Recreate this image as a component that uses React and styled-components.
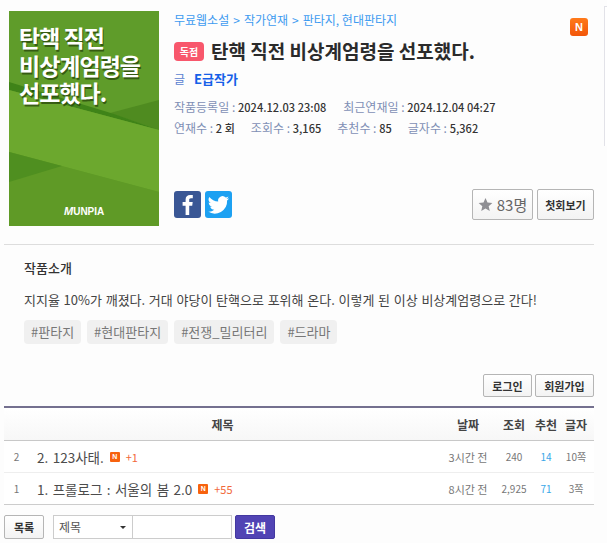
import styled, { createGlobalStyle } from "styled-components";

const GlobalStyle = createGlobalStyle`
  html, body {
    margin: 0;
    padding: 0;
    background: #fdfdfd;
    overflow: hidden;
  }
  body {
    font-family: "Noto Sans CJK KR", "Liberation Sans", sans-serif;
    color: #333;
  }
  * { box-sizing: border-box; }
`;

const Page = styled.div`
  width: 607px;
  height: 543px;
  position: relative;
  padding: 11px 13px 0 4px;
  display: flex;
  flex-direction: column;
`;

const ScrollEdge = styled.div`
  position: absolute;
  top: 6px;
  right: 0;
  width: 3px;
  height: 140px;
  border-left: 1px solid #e2e2e8;
  border-top: 1px solid #e2e2e8;
  background: #fff;
`;

const Head = styled.div`
  display: flex;
  height: 234px;
  padding-left: 5px;
  gap: 15px;
  border-bottom: 1px solid #ddd;
`;

const Cover = styled.div`
  position: relative;
  width: 150px;
  height: 215px;
  flex: none;
  background: #5f9c2a;
  overflow: hidden;
`;

const CoverArt = styled.svg`
  position: absolute;
  inset: 0;
`;

const CoverTitle = styled.div`
  position: absolute;
  left: 10px;
  top: 13px;
  font-size: 23px;
  line-height: 27.5px;
  font-weight: 700;
  letter-spacing: -1px;
  color: #fff;
  text-shadow: 1px 2px 0 rgba(40, 70, 10, 0.75);
  white-space: nowrap;
`;

const CoverLogo = styled.div`
  position: absolute;
  left: 55px;
  bottom: 9px;
  font-family: "Liberation Sans", sans-serif;
  font-size: 10px;
  font-weight: 700;
  color: #fff;
`;

const LogoInitial = styled.i`
  font-size: 11px;
`;

const Info = styled.div`
  position: relative;
  flex: 1;
  display: flex;
  flex-direction: column;
`;

const Crumbs = styled.div`
  font-size: 12px;
  line-height: 18px;
  color: #3d9bf0;
  display: flex;
  gap: 4px;
`;

const NBadge = styled.div`
  position: absolute;
  top: 7px;
  right: 6px;
  width: 18px;
  height: 18px;
  border-radius: 3px;
  background: linear-gradient(#ff7a1a, #f2560a);
  color: #fff;
  font-family: "Liberation Sans", sans-serif;
  font-size: 11px;
  font-weight: 700;
  text-align: center;
  line-height: 18px;
`;

const TitleRow = styled.div`
  display: flex;
  align-items: center;
  gap: 7px;
  margin-top: 9px;
`;

const Exclusive = styled.span`
  width: 30px;
  height: 19px;
  border-radius: 4px;
  background: #f8576c;
  color: #fff;
  font-size: 10px;
  font-weight: 700;
  line-height: 19px;
  text-align: center;
`;

const Title = styled.h1`
  margin: 0;
  font-size: 19px;
  line-height: 26px;
  font-weight: 700;
  color: #2b2b2b;
  white-space: nowrap;
`;

const AuthorRow = styled.div`
  display: flex;
  align-items: center;
  gap: 9px;
  margin-top: 6px;
  font-size: 12px;
  line-height: 18px;
  color: #5a7fd0;
`;

const AuthorName = styled.span`
  color: #1560e8;
  font-size: 13px;
  font-weight: 700;
`;

const MetaRow = styled.div`
  display: flex;
  gap: ${(p) => p.$gap}px;
  margin-top: ${(p) => p.$top}px;
  font-size: 12px;
  line-height: 16px;
  color: #7f8fb5;
  white-space: nowrap;
`;

const MetaValue = styled.b`
  color: #333;
  font-size: 11px;
  font-weight: 500;
  letter-spacing: 0.05px;
`;

const ActionRow = styled.div`
  margin-top: auto;
  margin-bottom: 24px;
  display: flex;
  align-items: center;
  gap: 4px;
`;

const Social = styled.svg`
  display: block;
  width: 27px;
  height: 27px;
`;

const Spacer = styled.div`
  flex: 1;
`;

const OutlineButton = styled.button`
  width: ${(p) => p.$w}px;
  height: ${(p) => p.$h || 23}px;
  padding: 0;
  border: 1px solid #b5b5b5;
  border-radius: 2px;
  background: linear-gradient(#fff, #f3f3f3);
  font-family: inherit;
  font-size: 11px;
  font-weight: 700;
  color: #333;
  display: inline-flex;
  align-items: center;
  justify-content: center;
  gap: 4px;
`;

const LikeCount = styled.span`
  font-size: 15px;
  font-weight: 400;
  color: #666;
`;

const Intro = styled.section`
  padding: 14px 0 0 20px;
`;

const IntroTitle = styled.h2`
  margin: 0;
  font-size: 13px;
  line-height: 18px;
  font-weight: 500;
  color: #333;
`;

const IntroText = styled.p`
  margin: 14px 0 0;
  font-size: 13px;
  line-height: 18px;
  word-spacing: 0.8px;
  color: #444;
  white-space: nowrap;
`;

const Tags = styled.div`
  display: flex;
  gap: 6px;
  margin-top: 11px;
`;

const Tag = styled.span`
  height: 24px;
  padding: 0 7px;
  border-radius: 4px;
  background: #f0f0f0;
  font-size: 13px;
  line-height: 24px;
  color: #777;
`;

const AuthBar = styled.div`
  display: flex;
  justify-content: flex-end;
  gap: 3px;
  margin-top: 30px;
`;

const Table = styled.div`
  margin-top: 9px;
  border-top: 2px solid #74708f;
  border-bottom: 1px solid #ccc;
  background: #fff;
`;

const Row = styled.div`
  display: grid;
  grid-template-columns: 25px 1fr 52px 40px 24px 36px;
  align-items: center;
  height: ${(p) => (p.$head ? 33 : p.$last ? 31 : 32)}px;
  border-bottom: ${(p) => (p.$last ? "none" : p.$head ? "1px solid #c8c8c8" : "1px solid #eee")};
  background: ${(p) => (p.$head ? "linear-gradient(#fff, #f7f7f7)" : "#fff")};
`;

const HeadCell = styled.div`
  text-align: center;
  font-size: 12px;
  font-weight: 700;
  color: #444;
  white-space: nowrap;
`;

const SubjectHead = styled(HeadCell)`
  padding-right: 26px;
`;

const Cell = styled.div`
  text-align: center;
  font-size: ${(p) => p.$size || 10}px;
  color: ${(p) => p.$color || "#777"};
  white-space: nowrap;
`;

const Subject = styled.div`
  display: flex;
  align-items: center;
  gap: 6px;
  padding-left: 8px;
  font-size: 13.5px;
  word-spacing: 1.4px;
  color: #4c4c4c;
`;

const NewMark = styled.span`
  width: 10px;
  height: 10px;
  border-radius: 1px;
  background: #f7620e;
  color: #fff;
  font-family: "Liberation Sans", sans-serif;
  font-size: 7px;
  font-weight: 700;
  line-height: 10px;
  text-align: center;
`;

const Plus = styled.span`
  font-size: 11px;
  color: #f2683a;
`;

const Footer = styled.div`
  display: flex;
  align-items: center;
  margin-top: 10px;
`;

const SearchForm = styled.div`
  display: flex;
  margin-left: 9px;
`;

const SelectBox = styled.div`
  width: 80px;
  height: 24px;
  border: 1px solid #ccc;
  background: #fff;
  padding-left: 5px;
  font-size: 12px;
  line-height: 22px;
  color: #555;
  position: relative;
`;

const Caret = styled.span`
  position: absolute;
  right: 6px;
  top: 10px;
  border-left: 3px solid transparent;
  border-right: 3px solid transparent;
  border-top: 3px solid #333;
`;

const SearchInput = styled.input`
  width: 99px;
  height: 24px;
  border: 1px solid #ccc;
  border-left: none;
  background: #fff;
`;

const SearchButton = styled.button`
  width: 40px;
  height: 24px;
  margin-left: 3px;
  border: 1px solid #4338a0;
  border-radius: 2px;
  background: #5144b4;
  color: #fff;
  font-family: inherit;
  font-size: 12px;
  font-weight: 700;
  padding: 0;
`;

const rows = [
  { no: 2, title: "2. 123사태.", plus: "+1", date: "3시간 전", views: "240", rec: "14", size: "10쪽" },
  { no: 1, title: "1. 프롤로그 : 서울의 봄 2.0", plus: "+55", date: "8시간 전", views: "2,925", rec: "71", size: "3쪽" },
];

export default function App() {
  return (
    <>
      <GlobalStyle />
      <Page>
        <ScrollEdge />
        <Head>
          <Cover>
            <CoverArt width="150" height="215" viewBox="0 0 150 215">
              <polygon points="101,102 150,89 150,119" fill="#4f8b20" />
              <polygon points="0,71 105,103 150,119 0,79" fill="#3f8318" />
              <polygon points="0,79 150,119 150,181 0,141" fill="#6ca82e" />
              <polygon points="0,141 150,181 150,215 0,215" fill="#5f9a26" />
              <polygon points="0,141 53,155 0,171" fill="#4f8f20" />
            </CoverArt>
            <CoverTitle>
              탄핵 직전
              <br />
              비상계엄령을
              <br />
              선포했다.
            </CoverTitle>
            <CoverLogo><LogoInitial>M</LogoInitial>UNPIA</CoverLogo>
          </Cover>
          <Info>
            <Crumbs>
              <span>무료웹소설</span>
              <span>&gt;</span>
              <span>작가연재</span>
              <span>&gt;</span>
              <span>판타지, 현대판타지</span>
            </Crumbs>
            <NBadge>N</NBadge>
            <TitleRow>
              <Exclusive>독점</Exclusive>
              <Title>탄핵 직전 비상계엄령을 선포했다.</Title>
            </TitleRow>
            <AuthorRow>
              <span>글</span>
              <AuthorName>E급작가</AuthorName>
            </AuthorRow>
            <MetaRow $gap={17} $top={11}>
              <span>작품등록일 : <MetaValue>2024.12.03 23:08</MetaValue></span>
              <span>최근연재일 : <MetaValue>2024.12.04 04:27</MetaValue></span>
            </MetaRow>
            <MetaRow $gap={16} $top={5}>
              <span>연재수 : <MetaValue>2 회</MetaValue></span>
              <span>조회수 : <MetaValue>3,165</MetaValue></span>
              <span>추천수 : <MetaValue>85</MetaValue></span>
              <span>글자수 : <MetaValue>5,362</MetaValue></span>
            </MetaRow>
            <ActionRow>
              <Social viewBox="0 0 27 27">
                <rect width="27" height="27" rx="3" fill="#3a5795" />
                <path d="M15.200 24v-9.300h3l.5-3.600h-3.500V9c0-1 .3-1.700 1.800-1.700h1.800V4.100c-.4 0-1.400-.1-2.700-.1-2.700 0-4.500 1.600-4.500 4.600v2.500H8.600v3.600h3V24z" fill="#fff" />
              </Social>
              <Social viewBox="0 0 27 27">
                <rect width="27" height="27" rx="3" fill="#1da1f2" />
                <path d="M24 7.200c-.8.400-1.600.6-2.500.7.900-.5 1.600-1.400 1.900-2.400-.8.500-1.800.9-2.700 1.100a4.400 4.400 0 0 0-7.500 4C9.700 10.400 6.500 8.600 4.300 6a4.400 4.400 0 0 0 1.400 5.900c-.7 0-1.400-.2-2-.5 0 2.100 1.500 3.900 3.500 4.300-.6.200-1.300.2-2 .1.600 1.800 2.200 3 4.100 3A8.800 8.800 0 0 1 3 20.600a12.400 12.400 0 0 0 19.100-11c.8-.7 1.500-1.500 1.900-2.400z" fill="#fff" />
              </Social>
              <Spacer />
              <OutlineButton $w={61} $h={31}>
                <svg width="15" height="15" viewBox="0 0 24 24">
                  <path d="M12 1.500l3.200 7.200 7.800.8-5.900 5.200 1.700 7.700-6.800-4-6.800 4 1.700-7.700L1 9.500l7.800-.8z" fill="#8f8f94" />
                </svg>
                <LikeCount>83명</LikeCount>
              </OutlineButton>
              <OutlineButton $w={57} $h={31}>첫회보기</OutlineButton>
            </ActionRow>
          </Info>
        </Head>
        <Intro>
          <IntroTitle>작품소개</IntroTitle>
          <IntroText>지지율 10%가 깨졌다. 거대 야당이 탄핵으로 포위해 온다. 이렇게 된 이상 비상계엄령으로 간다!</IntroText>
          <Tags>
            <Tag>#판타지</Tag>
            <Tag>#현대판타지</Tag>
            <Tag>#전쟁_밀리터리</Tag>
            <Tag>#드라마</Tag>
          </Tags>
        </Intro>
        <AuthBar>
          <OutlineButton $w={49}>로그인</OutlineButton>
          <OutlineButton $w={59}>회원가입</OutlineButton>
        </AuthBar>
        <Table>
          <Row $head>
            <span />
            <SubjectHead>제목</SubjectHead>
            <HeadCell>날짜</HeadCell>
            <HeadCell>조회</HeadCell>
            <HeadCell>추천</HeadCell>
            <HeadCell>글자</HeadCell>
          </Row>
          {rows.map((r, i) => (
            <Row key={r.no} $last={i === rows.length - 1}>
              <Cell>{r.no}</Cell>
              <Subject>
                <span>{r.title}</span>
                <NewMark>N</NewMark>
                <Plus>{r.plus}</Plus>
              </Subject>
              <Cell $size={11}>{r.date}</Cell>
              <Cell>{r.views}</Cell>
              <Cell $color="#3aa7e8">{r.rec}</Cell>
              <Cell>{r.size}</Cell>
            </Row>
          ))}
        </Table>
        <Footer>
          <OutlineButton $w={40} $h={24}>목록</OutlineButton>
          <SearchForm>
            <SelectBox>
              제목
              <Caret />
            </SelectBox>
            <SearchInput />
          </SearchForm>
          <SearchButton>검색</SearchButton>
        </Footer>
      </Page>
    </>
  );
}
